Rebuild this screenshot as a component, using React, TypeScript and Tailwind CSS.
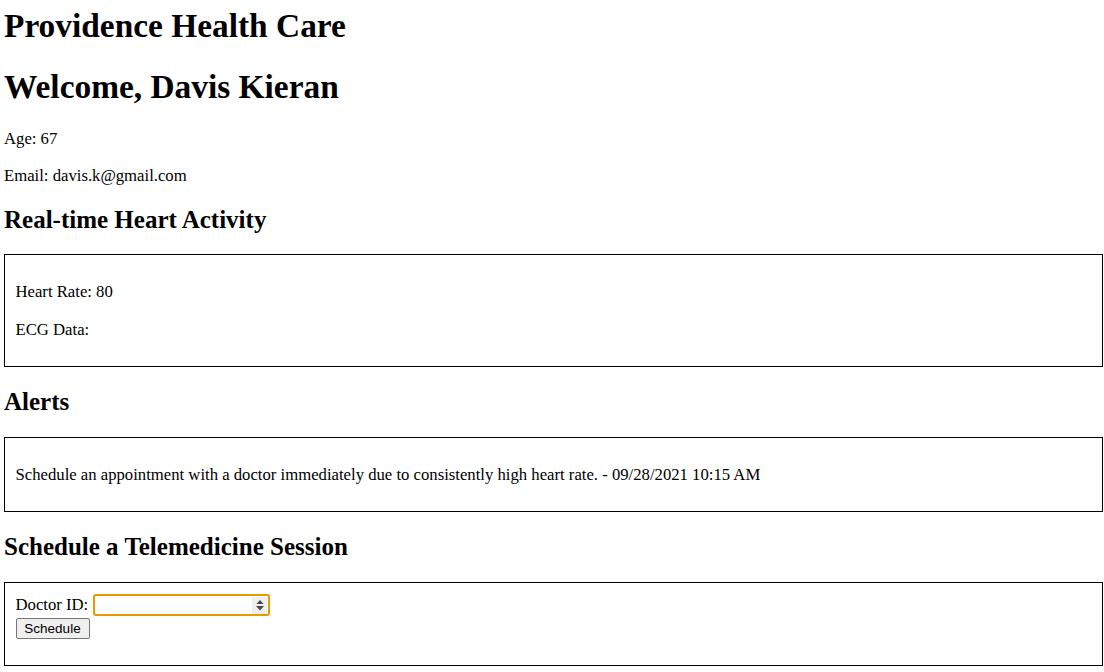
import React from "react";

export default function App() {
  return (
    <div className="min-h-[672px] bg-white pl-[4px] pr-[1px] pt-[5.5px] font-['Liberation_Serif','Times_New_Roman',serif] text-black">
      <h1 className="text-[33.4px] font-bold leading-[39.5px]">Providence Health Care</h1>
      <h1 className="mt-[21.5px] text-[33.4px] font-bold leading-[39.5px]">Welcome, Davis Kieran</h1>
      <p className="mt-[21.5px] text-[16.7px] leading-[21.5px]">Age: 67</p>
      <p className="mt-[16px] text-[16.7px] leading-[21.5px]">Email: davis.k@gmail.com</p>

      <h2 className="mt-[19.5px] text-[25px] font-bold leading-[28.5px]">Real-time Heart Activity</h2>
      <div className="mt-[19.5px] border border-black py-[10px] pl-[10.5px] pr-[10px]">
        <p className="mt-[16px] text-[16.7px] leading-[21.5px]">Heart Rate: 80</p>
        <p className="my-[16px] text-[16.7px] leading-[21.5px]">ECG Data:</p>
      </div>

      <h2 className="mt-[20.5px] text-[25px] font-bold leading-[28.5px]">Alerts</h2>
      <div className="mt-[20.5px] border border-black py-[10px] pl-[10.5px] pr-[10px]">
        <p className="my-[16px] text-[16.7px] leading-[21.5px]">
          Schedule an appointment with a doctor immediately due to consistently high heart rate. - 09/28/2021 10:15 AM
        </p>
      </div>

      <h2 className="mt-[20.5px] text-[25px] font-bold leading-[28.5px]">Schedule a Telemedicine Session</h2>
      <div className="mt-[21px] border border-black py-[10px] pl-[10.5px] pr-[10px]">
        <div className="mb-[15px]">
          <div className="flex h-[23px] items-start">
            <span className="text-[16.7px] leading-[23px]">Doctor ID:</span>
            <div className="ml-[5px] mt-[1px] flex h-[22px] w-[177px] items-center justify-end rounded-[3px] border-2 border-[#e69b00] bg-white pr-[1px]">
              <div className="flex h-[17px] w-[15px] flex-col items-center justify-center gap-[2px] bg-[#efefef]">
                <svg width="8" height="4.5" viewBox="0 0 8 4.5">
                  <path d="M0 4.5 L4 0 L8 4.5 Z" fill="#4a4a4a" />
                </svg>
                <svg width="8" height="4.5" viewBox="0 0 8 4.5">
                  <path d="M0 0 L4 4.5 L8 0 Z" fill="#4a4a4a" />
                </svg>
              </div>
            </div>
          </div>
          <button className="h-[21px] w-[74px] rounded-[2px] border border-[#767676] bg-[#efefef] font-['Liberation_Sans',Arial,sans-serif] text-[13.5px] leading-[15px] text-black">
            Schedule
          </button>
        </div>
      </div>
    </div>
  );
}
